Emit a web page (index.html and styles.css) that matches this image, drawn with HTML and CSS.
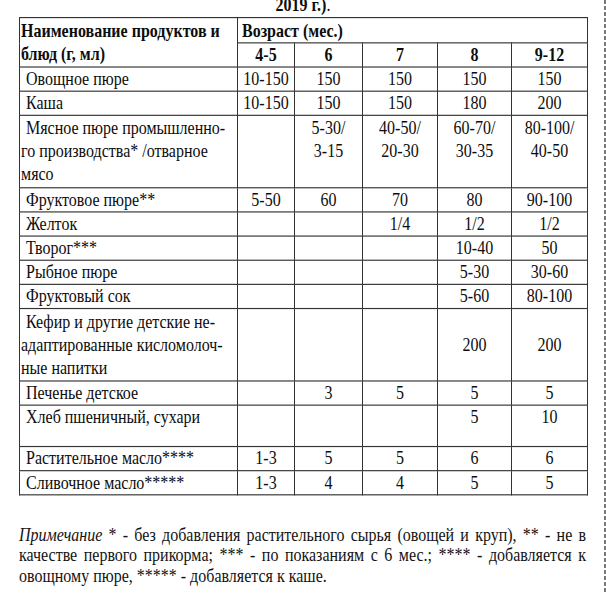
FILE: index.html
```html
<!DOCTYPE html>
<html lang="ru">
<head>
<meta charset="utf-8">
<title>Нормы прикорма</title>
<link rel="stylesheet" href="styles.css">
</head>
<body>
<div class="page">
  <div class="sheet">
    <p class="title"><b>2019 г.)</b>.</p>
    <table class="norms">
      <colgroup>
        <col class="c-name"><col class="c-a"><col class="c-b"><col class="c-c"><col class="c-d"><col class="c-e">
      </colgroup>
      <thead>
        <tr>
          <th rowspan="2" class="name-h">Наименование продуктов и<br>блюд (г, мл)</th>
          <th colspan="5" class="age-h">Возраст (мес.)</th>
        </tr>
        <tr class="ages"><th>4-5</th><th>6</th><th>7</th><th>8</th><th>9-12</th></tr>
      </thead>
      <tbody>
        <tr><td class="prod">Овощное пюре</td><td>10-150</td><td>150</td><td>150</td><td>150</td><td>150</td></tr>
        <tr><td class="prod">Каша</td><td>10-150</td><td>150</td><td>150</td><td>180</td><td>200</td></tr>
        <tr class="tall top"><td class="prod">Мясное пюре промышленно-<br>го производства* /отварное<br>мясо</td><td></td><td>5-30/<br>3-15</td><td>40-50/<br>20-30</td><td>60-70/<br>30-35</td><td>80-100/<br>40-50</td></tr>
        <tr><td class="prod">Фруктовое пюре**</td><td>5-50</td><td>60</td><td>70</td><td>80</td><td>90-100</td></tr>
        <tr><td class="prod">Желток</td><td></td><td></td><td>1/4</td><td>1/2</td><td>1/2</td></tr>
        <tr><td class="prod">Творог***</td><td></td><td></td><td></td><td>10-40</td><td>50</td></tr>
        <tr><td class="prod">Рыбное пюре</td><td></td><td></td><td></td><td>5-30</td><td>30-60</td></tr>
        <tr><td class="prod">Фруктовый сок</td><td></td><td></td><td></td><td>5-60</td><td>80-100</td></tr>
        <tr class="tall"><td class="prod">Кефир и другие детские не-<br>адаптированные кисломолоч-<br>ные напитки</td><td></td><td></td><td></td><td>200</td><td>200</td></tr>
        <tr><td class="prod">Печенье детское</td><td></td><td>3</td><td>5</td><td>5</td><td>5</td></tr>
        <tr class="bread top"><td class="prod">Хлеб пшеничный, сухари</td><td></td><td></td><td></td><td>5</td><td>10</td></tr>
        <tr><td class="prod">Растительное масло****</td><td>1-3</td><td>5</td><td>5</td><td>6</td><td>6</td></tr>
        <tr><td class="prod">Сливочное масло*****</td><td>1-3</td><td>4</td><td>4</td><td>5</td><td>5</td></tr>
      </tbody>
    </table>
    <div class="note">
      <span class="line"><i>Примечание</i> * - без добавления растительного сырья (овощей и круп), ** - не в</span>
      <span class="line">качестве первого прикорма; *** - по показаниям с 6 мес.; **** - добавляется к</span>
      <span class="line last">овощному пюре, ***** - добавляется к каше.</span>
    </div>
  </div>
</div>
</body>
</html>
```
FILE: styles.css
```css
html, body {
  margin: 0;
  padding: 0;
  background: #fff;
  overflow: hidden;
}

.page {
  width: 606px;
  height: 600px;
  background: repeating-linear-gradient(to bottom, #7a7a7a 0 4px, transparent 4px 6px) 604px 0 / 2px 100% no-repeat;
}

.sheet {
  transform: scaleY(1.15);
  transform-origin: 0 0;
  font-family: "Liberation Serif", "Times New Roman", serif;
  font-size: 16px;
  color: #0d0d0d;
}

.title {
  margin: -6px 0 0;
  height: 20px;
  line-height: 20px;
  text-align: center;
}

.norms {
  border-collapse: collapse;
  table-layout: fixed;
  width: 568px;
  margin: 0 0 0 19px;
  line-height: 20px;
}

.c-name { width: 218px; }
.c-a { width: 57px; }
.c-b { width: 68px; }
.c-c { width: 75px; }
.c-d { width: 74px; }
.c-e { width: 76px; }

.norms th,
.norms td {
  border: 1px solid #333;
  padding: 0 1px;
}

.norms th {
  font-weight: bold;
  text-align: center;
  vertical-align: middle;
}

.norms .name-h {
  text-align: left;
  padding-left: 1px;
}

.norms .age-h {
  text-align: left;
  padding-left: 4px;
  height: 21px;
}

.norms td {
  text-align: center;
  vertical-align: middle;
}

.norms td.prod {
  text-align: left;
  text-indent: 5px;
}

.norms tr.tall td {
  padding-top: 1px;
  padding-bottom: 1px;
}

.norms tr.top td {
  vertical-align: top;
}

.norms tr.bread td {
  height: 35px;
}

.note {
  width: 567px;
  margin: 26px 0 0 19px;
  line-height: 17.4px;
  color: #141414;
}

.note .line {
  display: block;
  text-align: justify;
  text-align-last: justify;
}

.note .line.last {
  text-align-last: left;
}
```
